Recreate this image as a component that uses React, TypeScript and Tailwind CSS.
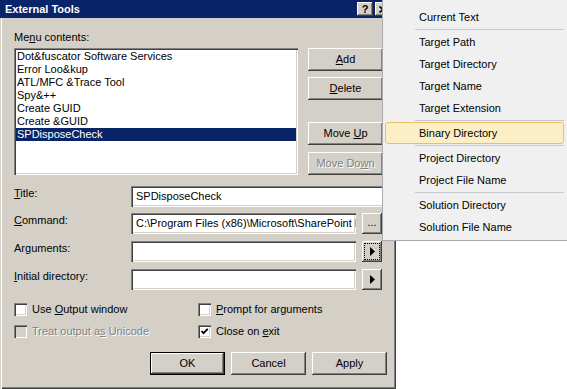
import React from 'react';

const raised =
  'bg-[#d4d0c8] shadow-[inset_-1px_-1px_0_#404040,inset_1px_1px_0_#ffffff,inset_-2px_-2px_0_#808080,inset_2px_2px_0_#d4d0c8]';
const sunken =
  'shadow-[inset_1px_1px_0_#808080,inset_2px_2px_0_#404040,inset_-1px_-1px_0_#ffffff,inset_-2px_-2px_0_#d4d0c8]';
const disabledText = 'text-[#808080] [text-shadow:1px_1px_0_#ffffff]';

const U = ({ children }: { children: React.ReactNode }) => (
  <span className="underline underline-offset-[1px]">{children}</span>
);

const listItems = [
  'Dot&fuscator Software Services',
  'Error Loo&kup',
  'ATL/MFC &Trace Tool',
  'Spy&++',
  'Create GUID',
  'Create &GUID',
  'SPDisposeCheck',
];

type MenuEntry = { label: string; active?: boolean } | 'sep';

const menuEntries: MenuEntry[] = [
  { label: 'Current Text' },
  'sep',
  { label: 'Target Path' },
  { label: 'Target Directory' },
  { label: 'Target Name' },
  { label: 'Target Extension' },
  'sep',
  { label: 'Binary Directory', active: true },
  'sep',
  { label: 'Project Directory' },
  { label: 'Project File Name' },
  'sep',
  { label: 'Solution Directory' },
  { label: 'Solution File Name' },
];

const Button = ({
  children,
  className = '',
  disabled = false,
  isDefault = false,
}: {
  children: React.ReactNode;
  className?: string;
  disabled?: boolean;
  isDefault?: boolean;
}) => (
  <div
    className={`flex h-[23px] w-[75px] items-center justify-center ${
      isDefault ? 'border border-black' : ''
    } ${raised} ${disabled ? disabledText : ''} ${className}`}
  >
    <span>{children}</span>
  </div>
);

const Arrow = () => (
  <svg width="5" height="9" viewBox="0 0 5 9">
    <polygon points="0,0 5,4.5 0,9" fill="#000" />
  </svg>
);

const Checkbox = ({
  checked = false,
  disabled = false,
}: {
  checked?: boolean;
  disabled?: boolean;
}) => (
  <div
    className={`flex h-[13px] w-[13px] items-center justify-center ${sunken} ${
      disabled ? 'bg-[#d4d0c8]' : 'bg-white'
    }`}
  >
    {checked && (
      <svg width="9" height="9" viewBox="0 0 9 9">
        <path d="M1.5 4 L3.5 6.2 L7.8 1.8" stroke="#000" strokeWidth="1.8" fill="none" />
      </svg>
    )}
  </div>
);

const FieldRow = ({
  label,
  className = '',
  children,
}: {
  label: React.ReactNode;
  className?: string;
  children: React.ReactNode;
}) => (
  <div className={`flex items-start ${className}`}>
    <div className="mt-[1px] h-[13px] w-[117px]">{label}</div>
    {children}
  </div>
);

const TextBox = ({ width, value = '' }: { width: string; value?: string }) => (
  <div
    className={`flex h-[21px] items-center overflow-hidden whitespace-nowrap bg-white pl-[5px] ${sunken} ${width}`}
  >
    {value}
  </div>
);

export default function App() {
  return (
    <div className="relative h-[389px] w-[567px] overflow-hidden bg-white font-['Liberation_Sans',Arial,sans-serif] text-[11px] leading-[13px] text-black">
      <div className="flex h-[389px] w-[396px] flex-col bg-[#d4d0c8] shadow-[inset_1px_0_0_#d4d0c8,inset_2px_0_0_#ffffff,inset_-1px_-1px_0_#404040,inset_-2px_-2px_0_#808080]">
        {/* title bar */}
        <div className="flex h-[18px] items-center bg-[#0a246a] pl-[5px]">
          <span className="font-bold text-white">External Tools</span>
          <div className="ml-auto mr-[5px] flex gap-[2px]">
            <div className={`flex h-[14px] w-[16px] items-center justify-center font-bold ${raised}`}>
              ?
            </div>
            <div className={`flex h-[14px] w-[16px] items-center justify-center ${raised}`}>
              <svg width="8" height="7" viewBox="0 0 8 7">
                <path d="M0.5 0.5 L7.5 6.5 M7.5 0.5 L0.5 6.5" stroke="#000" strokeWidth="1.6" />
              </svg>
            </div>
          </div>
        </div>

        <div className="flex flex-col pl-[14px]">
          <div className="mt-[13px] h-[13px]">
            Me<U>n</U>u contents:
          </div>

          <div className="mt-[4px] flex">
            <div className={`h-[127px] w-[284px] bg-white p-[2px] ${sunken}`}>
              {listItems.map((item, i) => {
                const selected = i === listItems.length - 1;
                return (
                  <div
                    key={i}
                    className={`h-[13px] whitespace-nowrap pl-[1px] ${
                      selected ? 'bg-[#0a246a] text-white' : ''
                    }`}
                  >
                    {item}
                  </div>
                );
              })}
            </div>
            <div className="ml-[10px] flex w-[75px] flex-col">
              <Button>
                <U>A</U>dd
              </Button>
              <Button className="mt-[6px]">
                <U>D</U>elete
              </Button>
              <Button className="mt-[22px]">
                Move <U>U</U>p
              </Button>
              <Button className="mt-[7px]" disabled>
                Move Do<U>w</U>n
              </Button>
            </div>
          </div>

          <FieldRow className="mt-[11px]" label={<><U>T</U>itle:</>}>
            <TextBox width="w-[260px]" value="SPDisposeCheck" />
          </FieldRow>

          <FieldRow className="mt-[6px]" label={<><U>C</U>ommand:</>}>
            <TextBox
              width="w-[225px]"
              value={'C:\\Program Files (x86)\\Microsoft\\SharePoint Di'}
            />
            <div className={`ml-[6px] flex h-[21px] w-[20px] items-center justify-center pb-[3px] ${raised}`}>
              ...
            </div>
          </FieldRow>

          <FieldRow className="mt-[7px]" label={<>Ar<U>g</U>uments:</>}>
            <TextBox width="w-[225px]" />
            <div className={`relative ml-[6px] flex h-[21px] w-[20px] items-center justify-center ${raised}`}>
              <Arrow />
              <div className="absolute inset-[2px] border border-dotted border-black" />
            </div>
          </FieldRow>

          <FieldRow className="mt-[7px]" label={<><U>I</U>nitial directory:</>}>
            <TextBox width="w-[225px]" />
            <div className={`ml-[6px] flex h-[21px] w-[20px] items-center justify-center ${raised}`}>
              <Arrow />
            </div>
          </FieldRow>

          <div className="mt-[13px] flex h-[13px] items-center">
            <div className="flex w-[184px] items-center gap-[5px]">
              <Checkbox />
              <span>
                Use <U>O</U>utput window
              </span>
            </div>
            <div className="flex items-center gap-[5px]">
              <Checkbox />
              <span>
                <U>P</U>rompt for arguments
              </span>
            </div>
          </div>

          <div className="mt-[9px] flex h-[13px] items-center">
            <div className="flex w-[184px] items-center gap-[5px]">
              <Checkbox disabled />
              <span className={disabledText}>
                Treat output a<U>s</U> Unicode
              </span>
            </div>
            <div className="flex items-center gap-[5px]">
              <Checkbox checked />
              <span>
                Close on <U>e</U>xit
              </span>
            </div>
          </div>
        </div>

        <div className="mt-[14px] flex justify-end gap-[6px] pr-[9px]">
          <Button isDefault>OK</Button>
          <Button>Cancel</Button>
          <Button>Apply</Button>
        </div>
      </div>

      {/* context menu */}
      <div className="absolute left-[382px] top-0 flex h-[241px] w-[185px] flex-col border-b border-l border-[#a7abb0] bg-[#f0f0f0] pt-[6px]">
        {menuEntries.map((entry, i) =>
          entry === 'sep' ? (
            <div key={i} className="h-[3px] pt-[1px]">
              <div className="ml-[32px] mr-[3px] h-px bg-[#c6c9ce]" />
            </div>
          ) : (
            <div
              key={i}
              className={`ml-[2px] mr-[3px] flex h-[22px] items-center rounded-[3px] border pl-[33px] ${
                entry.active ? 'border-[#e5c365] bg-[#fcefc6]' : 'border-transparent'
              }`}
            >
              {entry.label}
            </div>
          )
        )}
      </div>
    </div>
  );
}
